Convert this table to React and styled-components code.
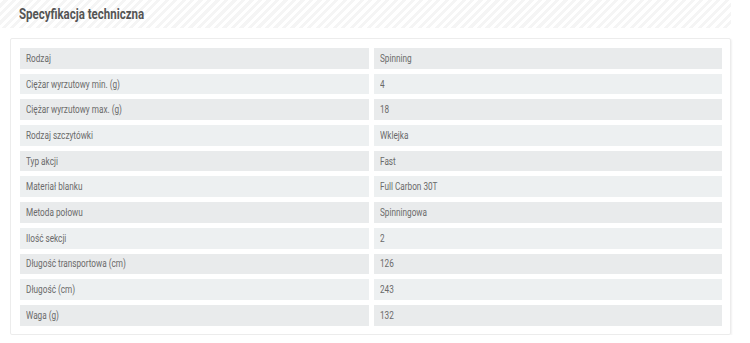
import styled, { createGlobalStyle } from 'styled-components';

const Global = createGlobalStyle`
  body {
    margin: 0;
    background: #fff;
    font-family: Roboto, "Noto Sans", sans-serif;
  }
`

const specs = [
  ['Rodzaj', 'Spinning'],
  ['Ciężar wyrzutowy min. (g)', '4'],
  ['Ciężar wyrzutowy max. (g)', '18'],
  ['Rodzaj szczytówki', 'Wklejka'],
  ['Typ akcji', 'Fast'],
  ['Materiał blanku', 'Full Carbon 30T'],
  ['Metoda połowu', 'Spinningowa'],
  ['Ilość sekcji', '2'],
  ['Długość transportowa (cm)', '126'],
  ['Długość (cm)', '243'],
  ['Waga (g)', '132'],
];

const Wrap = styled.div`
  width: 731px;
`

// the shop uses a condensed face; squeeze Roboto to the same width
const Narrow = styled.span`
  display: inline-block;
  white-space: nowrap;
  transform: scaleX(${p => p.$x || 0.82});
  transform-origin: left center;
`

const Header = styled.div`
  height: 28px;
  display: flex;
  align-items: center;
  padding-left: 19px;
  background: repeating-linear-gradient(
    -45deg,
    #ffffff 0,
    #ffffff 3px,
    #f5f5f5 3px,
    #f5f5f5 6px
  );
  h2 {
    margin: 0;
    font-weight: 700;
    font-size: 14px;
    color: #555;
  }
`

const Card = styled.div`
  margin: 10px 0 0 10px;
  border: 1px solid #ececec;
  border-radius: 2px;
  box-shadow: 1px 1px 2px rgba(0, 0, 0, 0.06);
  padding: 9px 8px 8px 9px;
  display: grid;
  grid-template-columns: 1fr 1fr;
  column-gap: 5px;
  row-gap: 5px;
`

const Cell = styled.div`
  height: 20.7px;
  display: flex;
  align-items: center;
  padding-left: 6px;
  font-size: 10px;
  color: #6a6a6a;
  background: ${p => (p.$odd ? '#e9ebec' : '#edf0f1')};
`

const App = () => {
  return (
    <Wrap>
      <Global />
      <Header>
        <h2><Narrow $x={0.82}>Specyfikacja techniczna</Narrow></h2>
      </Header>
      <Card>
        {specs.map(([k, v], i) => [
          <Cell key={k} $odd={i % 2 === 0}><Narrow>{k}</Narrow></Cell>,
          <Cell key={k + 'v'} $odd={i % 2 === 0}><Narrow>{v}</Narrow></Cell>,
        ])}
      </Card>
    </Wrap>
  )
}

export default App;
